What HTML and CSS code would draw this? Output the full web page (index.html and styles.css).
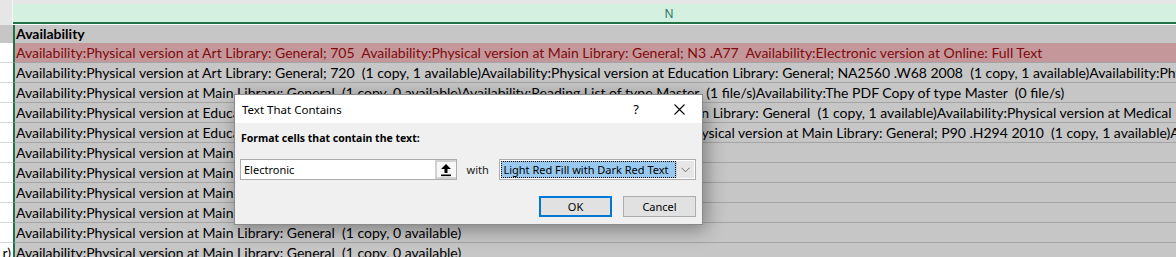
FILE: index.html
```html
<!DOCTYPE html>
<html>
<head>
<meta charset="utf-8">
<link rel="stylesheet" href="styles.css">
</head>
<body>
<div class="sheet">
  <div class="colheads">
    <div class="corner"></div>
    <div class="colhead-n"><span class="colname">N</span></div>
  </div>
  <div class="row hdr"><div class="m"></div><div class="n"><b>Availability</b></div></div>
  <div class="row hl"><div class="m"></div><div class="n">Availability:Physical version at Art Library: General; 705&nbsp; Availability:Physical version at Main Library: General; N3 .A77&nbsp; Availability:Electronic version at Online: Full Text</div></div>
  <div class="row"><div class="m"></div><div class="n">Availability:Physical version at Art Library: General; 720&nbsp; (1 copy, 1 available)Availability:Physical version at Education Library: General; NA2560 .W68 2008&nbsp; (1 copy, 1 available)Availability:Physical version at Main Library: General</div></div>
  <div class="row"><div class="m"></div><div class="n">Availability:Physical version at Main Library: General&nbsp; (1 copy, 0 available)Availability:Reading List of type Master&nbsp; (1 file/s)Availability:The PDF Copy of type Master&nbsp; (0 file/s)</div></div>
  <div class="row"><div class="m"></div><div class="n">Availability:Physical version at Education Library: General&nbsp; (1 copy, 1 available)Availability:Physical version at Main Library: General&nbsp; (1 copy, 1 available)Availability:Physical version at Medical Library: General</div></div>
  <div class="row"><div class="m"></div><div class="n">Availability:Physical version at Education Library: General; PN199 .W37 2011&nbsp; (1 copy, 1 available)Availability:Physical version at Main Library: General; P90 .H294 2010&nbsp; (1 copy, 1 available)Availability:Physical version at Main Library</div></div>
  <div class="row"><div class="m"></div><div class="n">Availability:Physical version at Main Library: General&nbsp; (1 copy, 0 available)</div></div>
  <div class="row"><div class="m"></div><div class="n">Availability:Physical version at Main Library: General&nbsp; (1 copy, 0 available)</div></div>
  <div class="row"><div class="m"></div><div class="n">Availability:Physical version at Main Library: General&nbsp; (1 copy, 0 available)</div></div>
  <div class="row"><div class="m"></div><div class="n">Availability:Physical version at Main Library: General&nbsp; (1 copy, 0 available)</div></div>
  <div class="row"><div class="m"></div><div class="n">Availability:Physical version at Main Library: General&nbsp; (1 copy, 0 available)</div></div>
  <div class="row"><div class="m"><span class="mtext">r)</span></div><div class="n">Availability:Physical version at Main Library: General&nbsp; (1 copy, 0 available)</div></div>
</div>

<div class="dialog">
  <div class="titlebar">
    <span class="title">Text That Contains</span>
    <span class="help">?</span>
    <svg class="close" width="11" height="11" viewBox="0 0 11 11"><path d="M0.5 0.5 L10.5 10.5 M10.5 0.5 L0.5 10.5" stroke="#000" stroke-width="1.1" fill="none"/></svg>
  </div>
  <div class="dbody">
    <div class="label">Format cells that contain the text:</div>
    <div class="inrow">
      <div class="textbox">
        <span class="tbtext">Electronic</span>
        <span class="refbtn"><svg width="12" height="14" viewBox="0 0 12 14"><polygon points="6,1 11,6 7.5,6 7.5,10 4.5,10 4.5,6 1,6" fill="#000"/><rect x="1" y="11.5" width="10" height="1.6" fill="#000"/></svg></span>
      </div>
      <span class="with">with</span>
      <div class="combo">
        <span class="sel">Light Red Fill with Dark Red Text</span>
        <span class="drop"><svg width="9" height="6" viewBox="0 0 9 6"><path d="M0.5 0.8 L4.5 4.8 L8.5 0.8" stroke="#6d6d6d" stroke-width="1" fill="none"/></svg></span>
      </div>
    </div>
    <div class="btnrow">
      <span class="btn ok">OK</span>
      <span class="btn">Cancel</span>
    </div>
  </div>
</div>
</body>
</html>
```

FILE: styles.css
```css
html, body {
  margin: 0;
  padding: 0;
}
body {
  width: 1176px;
  height: 257px;
  overflow: hidden;
  background: #ffffff;
  position: relative;
}
.sheet {
  width: 1176px;
  height: 257px;
  overflow: hidden;
  font-family: Lato, "Liberation Sans", sans-serif;
  font-size: 14px;
  color: #000;
}
.colheads {
  display: grid;
  grid-template-columns: 13px 1312px;
  height: 25px;
}
.corner {
  background: #e6e6e6;
  border-right: 1px solid #f6f6f6;
  box-sizing: border-box;
}
.colhead-n {
  background: #e6e6e6;
  padding-top: 4px;
  box-sizing: border-box;
  height: 25px;
}
.colname {
  display: block;
  height: 18px;
  line-height: 19px;
  background: #d3f0e0;
  border-bottom: 2px solid #217346;
  text-align: center;
  color: #1e6f5a;
  font-family: "Open Sans", "Noto Sans", sans-serif;
  font-size: 12px;
  box-shadow: 0 1px 0 #ffffff;
}
.row {
  display: grid;
  grid-template-columns: 13px 1312px;
  height: 20px;
}
.row.hdr {
  height: 18px;
}
.m {
  background: #ffffff;
  border-bottom: 1px solid #d6d6d6;
  box-sizing: border-box;
  overflow: hidden;
  white-space: nowrap;
  text-align: right;
  line-height: 19px;
}
.hdr .m {
  background: #c6c6c6;
  border-bottom: 0;
}
.mtext {
  padding-right: 2px;
}
.n {
  background: #c6c6c6;
  border-left: 2px solid #217346;
  border-bottom: 1px solid #a4a4a4;
  box-sizing: border-box;
  padding-left: 1px;
  white-space: nowrap;
  overflow: hidden;
  line-height: 19px;
}
.hdr .n {
  line-height: 18px;
  border-bottom: 0;
}
.hl .n {
  background: #c4989b;
  color: #7f0a0d;
  border-bottom-color: #a4a4a4;
}

.dialog {
  position: absolute;
  left: 234px;
  top: 94px;
  width: 469px;
  height: 131px;
  box-sizing: border-box;
  border: 1px solid #8a8a8a;
  background: #f0f0f0;
  box-shadow: 3px 4px 18px rgba(0, 0, 0, 0.38);
  font-family: "Noto Sans", "Open Sans", sans-serif;
  font-size: 11px;
  color: #000;
}
.titlebar {
  height: 28px;
  background: #ffffff;
  display: flex;
  align-items: center;
  padding-left: 7px;
  padding-right: 17px;
}
.title {
  flex: 1;
  font-size: 11.5px;
}
.help {
  font-size: 13px;
  margin-right: 35px;
}
.close {
  display: block;
}
.dbody {
  padding: 7px 6px 0 5px;
}
.label {
  font-weight: bold;
  font-size: 10.5px;
  height: 16px;
  line-height: 16px;
  padding-left: 1px;
}
.inrow {
  display: flex;
  align-items: center;
  margin-top: 13px;
  height: 21px;
}
.textbox {
  width: 217px;
  height: 21px;
  box-sizing: border-box;
  border: 1px solid #adadad;
  background: #ffffff;
  display: flex;
  align-items: center;
}
.tbtext {
  flex: 1;
  padding-left: 3px;
}
.refbtn {
  width: 21px;
  height: 19px;
  box-sizing: border-box;
  border: 2px solid #d2d2d2;
  border-right: 0;
  background: #f7f7f7;
  display: flex;
  align-items: center;
  justify-content: center;
}
.refbtn svg {
  display: block;
}
.with {
  width: 33px;
  padding-left: 10px;
  box-sizing: content-box;
  color: #1a1a1a;
}
.combo {
  width: 197px;
  height: 21px;
  box-sizing: border-box;
  border: 1px solid #adadad;
  background: #ffffff;
  display: flex;
  align-items: stretch;
  padding: 1px;
}
.sel {
  flex: 1;
  background: #99c9ef;
  outline: 1px dotted #000;
  outline-offset: -1px;
  padding-left: 2px;
  line-height: 17px;
  white-space: nowrap;
  overflow: hidden;
}
.drop {
  width: 17px;
  background: #e6e6e6;
  border-left: 1px solid #d0d0d0;
  display: flex;
  align-items: center;
  justify-content: center;
}
.btnrow {
  display: flex;
  justify-content: flex-end;
  gap: 11px;
  margin-top: 16px;
}
.btn {
  width: 73px;
  height: 21px;
  box-sizing: border-box;
  border: 1px solid #adadad;
  background: #e1e1e1;
  display: flex;
  align-items: center;
  justify-content: center;
}
.btn.ok {
  border: 2px solid #0078d7;
}
```
